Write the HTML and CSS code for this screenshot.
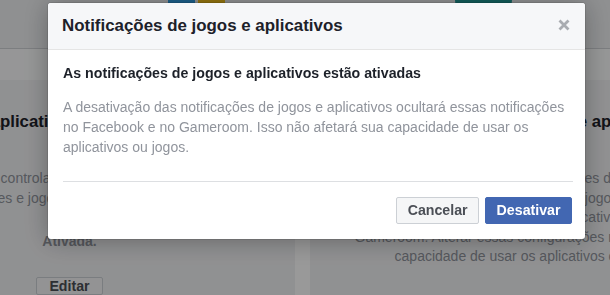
FILE: index.html
```html
<!DOCTYPE html>
<html lang="pt-BR">
<head>
<meta charset="utf-8">
<title>Notificações de jogos e aplicativos</title>
<link rel="stylesheet" href="styles.css">
</head>
<body>
<div class="page">
  <header class="topbar">
    <span class="thumb thumb-blue"></span>
    <span class="thumb thumb-gold"></span>
    <span class="thumb thumb-teal"></span>
  </header>
  <nav class="tabs"></nav>
  <main class="cards">
    <section class="card card-left">
      <h2 class="card-title">Notificações de aplicativos e jogos no Facebook</h2>
      <p class="card-desc">Você controla as notificações dos<br>solicitações e jogos que você recebe e vê</p>
      <p class="card-status">Ativada.</p>
      <button class="card-btn" type="button">Editar</button>
    </section>
    <section class="card card-right">
      <h2 class="card-title">Notificações de jogos e aplicativos</h2>
      <p class="card-desc">Você pode receber notificações de jogos<br>e aplicativos no próprio jogo e<br>nas opções do seu aplicativo.<br>Gameroom. Alterar essas configurações não afetará sua<br>capacidade de usar os aplicativos ou jogos.</p>
    </section>
  </main>
</div>

<div class="overlay"></div>

<div class="dialog" role="dialog" aria-labelledby="dlg-title">
  <div class="dialog-header">
    <h1 class="dialog-title" id="dlg-title">Notificações de jogos e aplicativos</h1>
    <button class="dialog-close" type="button" aria-label="Fechar">
      <svg width="12" height="12" viewBox="0 0 12 12" aria-hidden="true"><path d="M1.5 1.5 L10.5 10.5 M10.5 1.5 L1.5 10.5" stroke="#a9acb1" stroke-width="2.8" stroke-linecap="butt" fill="none"/></svg>
    </button>
  </div>
  <div class="dialog-body">
    <h3 class="dialog-subtitle">As notificações de jogos e aplicativos estão ativadas</h3>
    <p class="dialog-text">A desativação das notificações de jogos e aplicativos ocultará essas notificações no Facebook e no Gameroom. Isso não afetará sua capacidade de usar os aplicativos ou jogos.</p>
  </div>
  <div class="dialog-divider"></div>
  <div class="dialog-footer">
    <button class="btn btn-cancel" type="button">Cancelar</button>
    <button class="btn btn-primary" type="button">Desativar</button>
  </div>
</div>
</body>
</html>
```

FILE: styles.css
```css
html, body {
  margin: 0;
  padding: 0;
}

body {
  width: 610px;
  height: 295px;
  overflow: hidden;
  background: #ffffff;
  font-family: "Liberation Sans", Arial, Helvetica, sans-serif;
  color: #1d2129;
}

.page {
  width: 610px;
  height: 295px;
  overflow: hidden;
}

/* ---------- background page ---------- */
.topbar {
  height: 48px;
  background: #eef0f2;
  border-bottom: 1px solid #cfd2d6;
  display: flex;
  align-items: flex-start;
  padding-left: 168px;
  box-sizing: content-box;
}

.thumb {
  display: block;
  height: 14px;
}

.thumb-blue {
  width: 27px;
  background: #2f9fe6;
  margin-right: 3px;
}

.thumb-gold {
  width: 27px;
  background: #f5c21a;
}

.thumb-teal {
  width: 57px;
  margin-left: 230px;
  background: #1f9a98;
  border-radius: 0 0 18px 18px;
}

.tabs {
  height: 31px;
  background: #fafbfc;
}

.cards {
  display: flex;
  gap: 15px;
  margin-left: -156px;
  height: 215px;
  background: #ffffff;
}

.card {
  flex: none;
  background: #f1f2f4;
  padding-top: 32px;
  display: flex;
  flex-direction: column;
  align-items: center;
  text-align: center;
}

.card-left {
  width: 451px;
}

.card-right {
  width: 440px;
}

.card-title {
  margin: 0;
  font-size: 16.8px;
  line-height: 20px;
  font-weight: bold;
  color: #1d2129;
  white-space: nowrap;
}

.card-left .card-title {
  padding-right: 28px;
}

.card-right .card-title {
  padding-left: 18px;
}

.card-desc {
  margin: 37px 0 0;
  font-size: 14px;
  line-height: 19.6px;
  color: #90949c;
  white-space: nowrap;
}

.card-status {
  margin: 24px 0 0;
  font-size: 14px;
  line-height: 19.6px;
  font-weight: bold;
  color: #90949c;
}

.card-btn {
  margin-top: 25px;
  height: 27px;
  padding: 0 12px;
  font-family: inherit;
  font-size: 14.2px;
  font-weight: bold;
  color: #4b4f56;
  background: #f5f6f7;
  border: 1px solid #ccd0d5;
  border-radius: 2px;
}

/* ---------- overlay ---------- */
.overlay {
  position: fixed;
  inset: 0;
  background: rgba(0, 0, 0, 0.4);
}

/* ---------- dialog ---------- */
.dialog {
  position: fixed;
  top: 3px;
  left: 48px;
  width: 537px;
  background: #ffffff;
  border-radius: 3px;
  overflow: hidden;
  box-shadow: 0 2px 26px rgba(0, 0, 0, 0.3), 0 0 0 1px rgba(0, 0, 0, 0.1);
}

.dialog-header {
  display: flex;
  align-items: center;
  justify-content: space-between;
  padding: 13px 15px 13px 14px;
  background: #f6f7f9;
  border-bottom: 1px solid #e5e5e5;
}

.dialog-title {
  margin: 0;
  font-size: 16.9px;
  line-height: 20px;
  font-weight: bold;
  color: #1d2129;
}

.dialog-close {
  display: flex;
  width: 12px;
  height: 12px;
  padding: 0;
  margin-top: -2px;
  border: 0;
  background: transparent;
}

.dialog-body {
  padding: 14px 12px 24px 15px;
}

.dialog-subtitle {
  margin: 0;
  font-size: 14.2px;
  line-height: 18px;
  font-weight: bold;
  color: #1d2129;
}

.dialog-text {
  margin: 15px 0 0;
  font-size: 14px;
  line-height: 20px;
  color: #90949c;
}

.dialog-divider {
  height: 1px;
  margin: 0 12px 0 15px;
  background: #dddfe2;
}

.dialog-footer {
  display: flex;
  justify-content: flex-end;
  gap: 6px;
  padding: 15px 13px 15px 15px;
}

.btn {
  height: 27px;
  padding: 0 10.5px;
  font-family: inherit;
  font-size: 14.2px;
  font-weight: bold;
  border-radius: 2px;
  line-height: 25px;
}

.btn-cancel {
  color: #4b4f56;
  background: #f5f6f7;
  border: 1px solid #ccd0d5;
}

.btn-primary {
  color: #ffffff;
  background: #4267b2;
  border: 1px solid #4267b2;
}
```
